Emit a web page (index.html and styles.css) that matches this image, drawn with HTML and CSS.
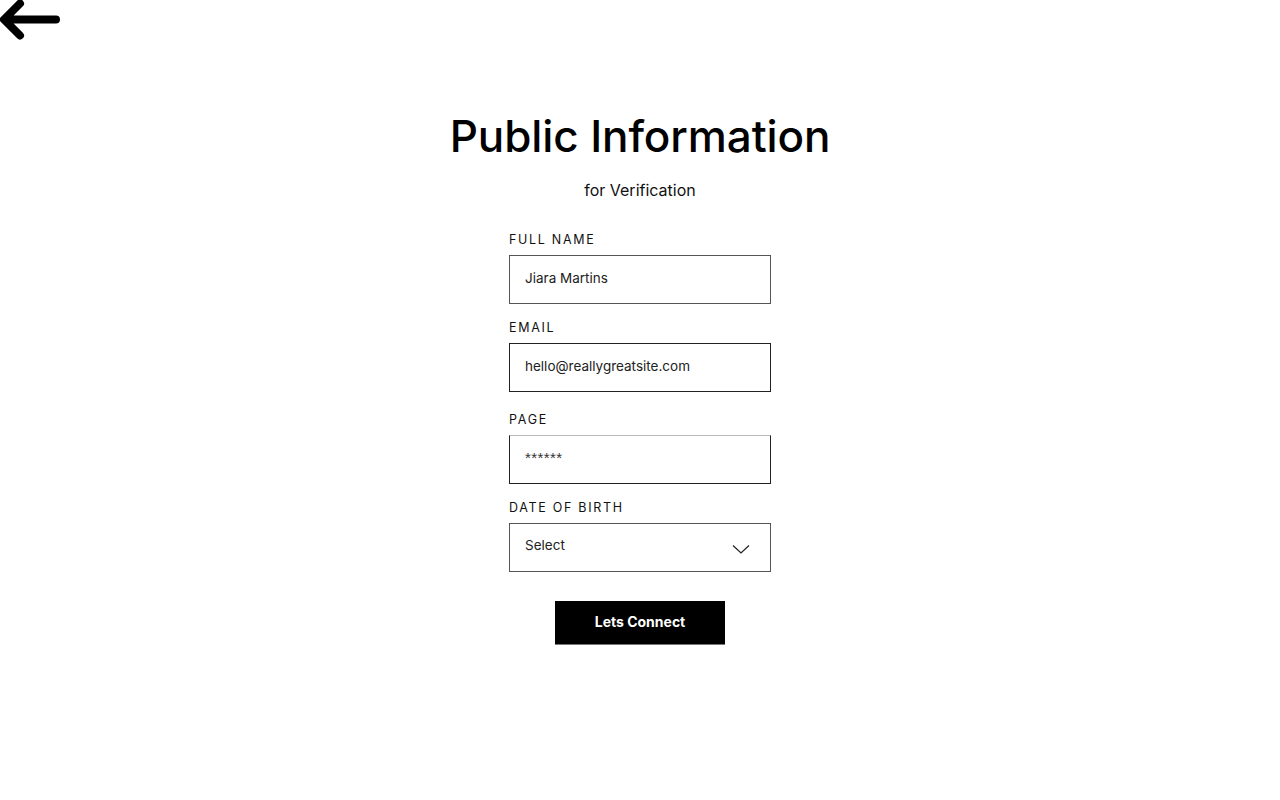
FILE: index.html
```html
<!DOCTYPE html>
<html lang="en">
<head>
<meta charset="utf-8">
<title>Public Information</title>
<link rel="stylesheet" href="styles.css">
</head>
<body>
<header class="top">
  <a class="back" href="#" aria-label="Back">
    <svg width="62" height="42" viewBox="0 0 62 42" fill="none" stroke="#000" stroke-width="8" stroke-linecap="round" stroke-linejoin="round">
      <path d="M56 20.5H5M20 4.5L4 20.5L20 36.5"/>
    </svg>
  </a>
</header>
<main class="main">
  <h1 class="title">Public Information</h1>
  <p class="subtitle">for Verification</p>
  <form class="form">
    <div class="field">
      <label class="label">FULL NAME</label>
      <div class="input">Jiara Martins</div>
    </div>
    <div class="field">
      <label class="label">EMAIL</label>
      <div class="input input--dark">hello@reallygreatsite.com</div>
    </div>
    <div class="field field--page">
      <label class="label">PAGE</label>
      <div class="input input--page"><span class="stars">******</span></div>
    </div>
    <div class="field">
      <label class="label">DATE OF BIRTH</label>
      <div class="input input--select">
        <span>Select</span>
        <svg class="chev" width="18" height="10" viewBox="0 0 18 10" fill="none" stroke="#222" stroke-width="1.2">
          <path d="M1 1.5L9 9L17 1.5"/>
        </svg>
      </div>
    </div>
    <button class="btn" type="button">Lets Connect</button>
  </form>
</main>
</body>
</html>
```

FILE: styles.css
```css
* { box-sizing: border-box; }
html, body { margin: 0; padding: 0; background: #fff; }
body {
  font-family: "Inter", "Noto Sans", sans-serif;
  color: #000;
  width: 1280px;
  height: 800px;
  overflow: hidden;
}
.top { height: 42px; display: flex; }
.back { display: block; width: 62px; height: 42px; margin-top: -1px; }
.back svg { display: block; }

.main {
  display: flex;
  flex-direction: column;
  align-items: center;
  padding-top: 67px;
}
.title {
  margin: 0;
  font-size: 44px;
  line-height: 54px;
  font-weight: 500;
  letter-spacing: -0.1px;
}
.subtitle {
  margin: 17px 0 0;
  font-size: 16px;
  line-height: 20px;
  font-weight: 400;
  color: #111;
}
.form {
  margin-top: 32px;
  width: 262px;
  display: flex;
  flex-direction: column;
  gap: 16px;
}
.field { display: flex; flex-direction: column; gap: 8px; }
.field--page { margin-top: 4px; }
.label {
  font-size: 12.5px;
  line-height: 15px;
  letter-spacing: 1.7px;
  font-weight: 400;
  color: #111;
}
.input {
  height: 49px;
  border: 1px solid #555;
  padding: 0 15px;
  display: flex;
  align-items: center;
  font-size: 13.5px;
  color: #222;
  padding-bottom: 4px;
}
.input--dark { border-color: #222; }
.input--page { border-color: #222; border-top-color: #bbb; }
.stars { font-family: "Liberation Sans", Arial, sans-serif; font-size: 15px; letter-spacing: 0.4px; color: #333; }
.input--select { justify-content: space-between; padding-right: 20px; padding-bottom: 5px; }
.chev { margin-top: 7px; }
.btn {
  align-self: center;
  margin-top: 13px;
  width: 170px;
  height: 44px;
  border: 0;
  border-bottom: 1px solid #777;
  background: #000;
  color: #fff;
  font-family: "Inter", sans-serif;
  font-weight: 700;
  font-size: 14px;
  padding: 0 0 2px;
  cursor: pointer;
}
```
